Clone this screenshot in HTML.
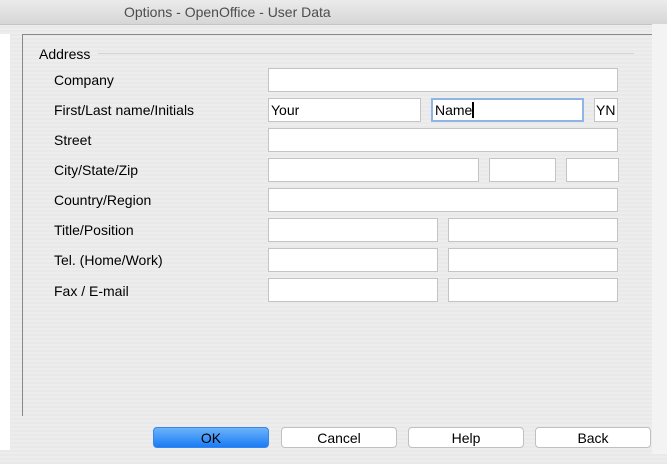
<!DOCTYPE html><html><head><style>
body{margin:0;width:667px;height:464px;overflow:hidden;background:repeating-linear-gradient(#ededed 0 2px,#e9e9e9 2px 4px);font-family:"Liberation Sans",sans-serif;font-size:14px;color:#000;position:relative}
.t{position:absolute;left:0;top:0;width:667px;height:24px;background:linear-gradient(#ebebeb,#d6d6d6);border-bottom:1px solid #c4c4c4;line-height:24px;color:#4d4d4d;font-size:14px}
.a{position:absolute}
.f{position:absolute;background:#fff;border:1px solid #c4c4c4;line-height:22px;padding-left:2px;box-sizing:border-box;height:24px}
.l{position:absolute;left:54px}
.b{position:absolute;top:427px;width:116px;height:21px;border-radius:4px;background:#fff;border:1px solid #c0c0c0;box-sizing:border-box;text-align:center;line-height:20px}
</style></head><body>
<div class="t"><span style="position:absolute;left:124px">Options - OpenOffice - User Data</span></div>
<div class="a" style="left:0;top:34px;width:10px;height:416px;background:#fff"></div>
<div class="a" style="left:22px;top:34px;width:1px;height:382px;background:#888"></div>
<div class="a" style="left:22px;top:34px;width:630px;height:1px;background:#888"></div>
<div class="a" style="left:652px;top:24px;width:15px;height:430px;background:#f3f3f3"></div>
<div class="a" style="left:39px;top:46px">Address</div>
<div class="a" style="left:98px;top:53px;width:536px;height:1px;background:#d4d4d4"></div>
<div class="l" style="top:72px">Company</div>
<div class="l" style="top:102px">First/Last name/Initials</div>
<div class="l" style="top:132px">Street</div>
<div class="l" style="top:162px">City/State/Zip</div>
<div class="l" style="top:192px">Country/Region</div>
<div class="l" style="top:222px">Title/Position</div>
<div class="l" style="top:252px">Tel. (Home/Work)</div>
<div class="l" style="top:283px">Fax / E-mail</div>
<div class="f" style="left:268px;top:68px;width:350px"></div>
<div class="f" style="left:268px;top:98px;width:153px">Your</div>
<div class="f" style="left:431px;top:98px;width:153px;border:2px solid #8fb4e6;line-height:20px;padding-left:2px">Name<span style="display:inline-block;width:2px;height:16px;background:#000;vertical-align:-3px"></span></div>
<div class="f" style="left:594px;top:98px;width:24px;padding-left:1px">YN</div>
<div class="f" style="left:268px;top:128px;width:350px"></div>
<div class="f" style="left:268px;top:158px;width:211px"></div>
<div class="f" style="left:489px;top:158px;width:67px"></div>
<div class="f" style="left:566px;top:158px;width:53px"></div>
<div class="f" style="left:268px;top:188px;width:350px"></div>
<div class="f" style="left:268px;top:218px;width:170px"></div>
<div class="f" style="left:448px;top:218px;width:170px"></div>
<div class="f" style="left:268px;top:248px;width:170px"></div>
<div class="f" style="left:448px;top:248px;width:170px"></div>
<div class="f" style="left:268px;top:278px;width:170px"></div>
<div class="f" style="left:448px;top:278px;width:170px"></div>
<div class="b" style="left:153px;background:linear-gradient(#6cb3fa,#1a7cf5);border-color:#3a86e8">OK</div>
<div class="b" style="left:281px">Cancel</div>
<div class="b" style="left:408px">Help</div>
<div class="b" style="left:535px">Back</div>
</body></html>
